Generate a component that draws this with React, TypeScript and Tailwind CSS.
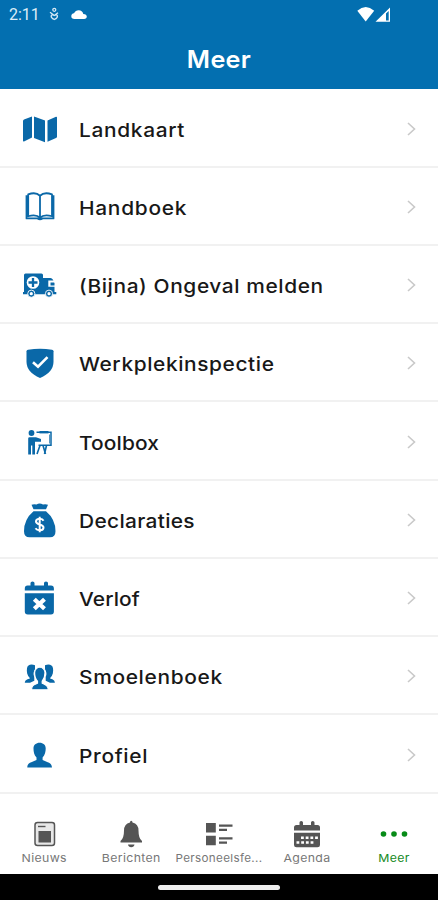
import type { ReactNode } from "react";

const BLUE = "#0a68a8";

function Icon({ top, children }: { top: number; children: ReactNode }) {
  return (
    <svg viewBox={`20 ${top} 40 40`} className="h-10 w-10 shrink-0" fill={BLUE}>
      {children}
    </svg>
  );
}

const rows: { label: string; spacing: string; icon: ReactNode }[] = [
  {
    label: "Landkaart",
    spacing: "tracking-[0.6px]",
    icon: (
      <Icon top={108.5}>
        <path d="M23 120.5Q23 119.5 24 119L32 116V137L24 141Q23 141.3 23 140.3ZM34 116L45 120V141.8L34 137.5ZM47.5 120L56 116.2Q57 116 57 117V136Q57 137 56 137.5L47.5 141.2Z" />
      </Icon>
    ),
  },
  {
    label: "Handboek",
    spacing: "tracking-[0.65px]",
    icon: (
      <Icon top={186.75}>
        <path
          d="M40 195.5C37 192.6 32.5 192.5 28.2 194.2V216C32 215 37.5 215 40 217.5C42.5 215 48 215 52 216V194.2C47.5 192.5 43 192.6 40 195.5V217M26.5 195V218.2H37.5Q40 220 42.5 218.2H53.5V195"
          fill="none"
          stroke={BLUE}
          strokeWidth="1.8"
          strokeLinejoin="round"
        />
      </Icon>
    ),
  },
  {
    label: "(Bijna) Ongeval melden",
    spacing: "tracking-[0.54px]",
    icon: (
      <Icon top={265}>
        <path d="M24 275Q24 273.5 25.5 273.5H41.5Q43 273.5 43 275V278H50.5Q52 278 52.8 279.5L54.5 283V292H56.3V294.2H23V292H24Z" />
        <circle cx="33" cy="282.5" r="6.3" fill="#fff" />
        <path d="M33 278V287M28.5 282.5H37.5" stroke={BLUE} strokeWidth="2.3" />
        <path d="M48.3 280.5H55V282.5H50.5V285.5H55V286.8H48.3Z" fill="#fff" />
        <circle cx="31.3" cy="293.7" r="3.6" stroke="#fff" strokeWidth=".9" />
        <circle cx="49" cy="293.7" r="3.6" stroke="#fff" strokeWidth=".9" />
        <circle cx="31.3" cy="293.7" r="1.6" fill="#fff" />
        <circle cx="49" cy="293.7" r="1.6" fill="#fff" />
      </Icon>
    ),
  },
  {
    label: "Werkplekinspectie",
    spacing: "tracking-[0.54px]",
    icon: (
      <Icon top={343.25}>
        <path d="M26.5 351.5Q26.5 350.3 28 350Q34 349 40 349Q46 349 52 350Q53.5 350.3 53.5 351.5V362Q53.5 372.5 40 378.3Q26.5 372.5 26.5 362Z" />
        <path d="M33 362.5L38 367L47.5 357.3" fill="none" stroke="#fff" strokeWidth="2.6" />
      </Icon>
    ),
  },
  {
    label: "Toolbox",
    spacing: "tracking-[0.1px]",
    icon: (
      <Icon top={421.5}>
        <circle cx="31.5" cy="432.5" r="2.9" />
        <path d="M28.2 438Q28.2 436.8 29.5 436.8H36L41 438.5V441.2H35V454H32.3V445H31V454H28.2Z" />
        <path d="M36.5 431.7H51V444.7H38.5" fill="none" stroke={BLUE} strokeWidth="1.5" />
        <path d="M39.5 431.7H48.5" stroke={BLUE} strokeWidth="2.4" />
        <path d="M40 445L37 453.5M46.5 445L44.5 453.5M43 445L45.5 453.5" fill="none" stroke={BLUE} strokeWidth="1.6" />
        <path d="M49.5 434V443" stroke={BLUE} strokeWidth=".7" />
      </Icon>
    ),
  },
  {
    label: "Declaraties",
    spacing: "tracking-[0.3px]",
    icon: (
      <Icon top={499.75}>
        <path d="M31.5 504.5Q34 503.5 36.5 504.3Q39.5 502.3 43 504.3Q45.5 503.5 48 504.5L46 509H33.5ZM33.5 511H46Q55.5 519 55.5 531Q55.5 537 50 537H29.5Q24 537 24 531Q24 519 33.5 511Z" />
        <path d="M43.5 520.5C42 517.5 36 518 36 521.3C36 525 43.5 523.5 43.5 527.2C43.5 530.5 37.5 531 35.5 528M39.7 516.5V532" fill="none" stroke="#fff" strokeWidth="2" />
      </Icon>
    ),
  },
  {
    label: "Verlof",
    spacing: "tracking-[0.1px]",
    icon: (
      <Icon top={578}>
        <path d="M24.8 590.5V588.5Q24.8 585.5 27.5 585.5H30.5V583Q30.5 581.5 32.5 581.5Q34.5 581.5 34.5 583V585.5H44V583Q44 581.5 46 581.5Q48 581.5 48 583V585.5H51Q53.9 585.5 53.9 588.5V590.5ZM24.8 593.3H53.9V611.5Q53.9 614.5 51 614.5H27.8Q24.8 614.5 24.8 611.5Z" />
        <path d="M34.3 599.2L44.5 608.8M44.5 599.2L34.3 608.8" stroke="#fff" strokeWidth="4.2" />
      </Icon>
    ),
  },
  {
    label: "Smoelenboek",
    spacing: "tracking-[0.6px]",
    icon: (
      <Icon top={656.25}>
        <path d="M24.8 683C25 679.8 28 679.6 30 678.5C27 675.5 26.5 672 27 668.5C27.5 665 31 664 35 665.5V669.5C33.5 671.5 33 675 34.3 677V681L30 683ZM54.9 683C54.7 679.8 52 679.6 50 678.5C53 675.5 53.5 672 53 668.5C52.5 665 49 664 45 665.5V669.5C46.5 671.5 47 675 45.7 677V681L50 683Z" />
        <path
          d="M31.5 690C31.8 685 34.5 685 37.5 683.5V681.5C35.5 679.5 34.6 676 34.6 673C34.6 669.8 37 667.5 39.8 667.5C42.6 667.5 45 669.8 45 673C45 676 44 679.5 42.2 681.5V683.5C45 685 48 685 48.3 690Z"
          stroke="#fff"
          strokeWidth="1.2"
        />
      </Icon>
    ),
  },
  {
    label: "Profiel",
    spacing: "tracking-[0.6px]",
    icon: (
      <Icon top={734.5}>
        <path d="M27.3 767C27.5 761.5 32 762 36.5 759.5V757C34 754.5 33.5 751 33.5 748C33.5 744.5 36 742.3 39.6 742.3C43.2 742.3 45.7 744.5 45.7 748C45.7 751 45 754.5 42.6 757V759.5C47 762 51.5 761.5 52 767Z" />
      </Icon>
    ),
  },
];

const tabs: { label: string; stretch: string; active?: boolean; icon: ReactNode }[] = [
  {
    label: "Nieuws",
    stretch: "scale-x-[1.12]",
    icon: (
      <svg viewBox="29.5 818.5 28 30" className="h-[30px] w-7" fill="#555">
        <rect x="34.5" y="822" width="19.5" height="23" rx="2.5" fill="#e8e8e8" stroke="#555" strokeWidth="1.5" />
        <path d="M37.5 826H45" stroke="#555" strokeWidth="1.4" />
        <rect x="38" y="830.5" width="12.5" height="11.5" />
      </svg>
    ),
  },
  {
    label: "Berichten",
    stretch: "scale-x-[1.12]",
    icon: (
      <svg viewBox="117.5 818.5 28 30" className="h-[30px] w-7" fill="#555">
        <path d="M130.5 822Q130.5 820.3 131.7 820.3Q133 820.3 133 822Q139 823.5 139 830Q139 838 142.5 840.5V842H121V840.5Q124.5 838 124.5 830Q124.5 823.5 130.5 822ZM128.5 844H135Q134.5 846.8 131.7 846.8Q129 846.8 128.5 844Z" />
      </svg>
    ),
  },
  {
    label: "Personeelsfe...",
    stretch: "scale-x-[1.06]",
    icon: (
      <svg viewBox="205 818.5 28 30" className="h-[30px] w-7" fill="#555">
        <path d="M206 822.5H215.8V832H206ZM206 835.3H215.8V844.8H206ZM219 824H232.5V826.2H219ZM219 828.2H227V830.4H219ZM219 836.7H232.5V838.9H219ZM219 841H227V843.2H219Z" />
      </svg>
    ),
  },
  {
    label: "Agenda",
    stretch: "scale-x-[1.12]",
    icon: (
      <svg viewBox="293 818.5 28 30" className="h-[30px] w-7" fill="#555">
        <path d="M294 830V827Q294 824.5 296.5 824.5H299.5V822Q299.5 820.5 301.2 820.5Q303 820.5 303 822V824.5H311V822Q311 820.5 312.7 820.5Q314.5 820.5 314.5 822V824.5H317.5Q320 824.5 320 827V830ZM294 832.3H320V844.5Q320 846.8 317.5 846.8H296.5Q294 846.8 294 844.5Z" />
        <path d="M301 837.2H318.5M296.5 842H314" stroke="#fff" strokeWidth="2.5" strokeDasharray="2.8 1.9" />
      </svg>
    ),
  },
  {
    label: "Meer",
    stretch: "scale-x-[1.12]",
    active: true,
    icon: (
      <svg viewBox="380 818.5 28 30" className="h-[30px] w-7" fill="#078b17">
        <circle cx="383.5" cy="833.5" r="2.8" />
        <circle cx="394" cy="833.5" r="2.8" />
        <circle cx="404.5" cy="833.5" r="2.8" />
      </svg>
    ),
  },
];

export default function App() {
  return (
    <div className="flex h-[900px] w-[438px] flex-col overflow-hidden bg-white font-['Inter',sans-serif]">
      <header className="flex h-[89.4px] shrink-0 flex-col bg-[#036fb0] text-white">
        <div className="flex h-7 items-center pl-[9px] pr-[46px]">
          <span className="w-[39px] pt-0.5 font-['Roboto',sans-serif] text-base leading-7 text-[#dcecf7]">2:11</span>
          <svg viewBox="48 6 12 16" className="h-4 w-3" fill="none" stroke="#d5e8f5" strokeWidth="1.3">
            <circle cx="54.3" cy="9.8" r="1.5" />
            <path d="M50 12.3L54.3 15.5L58 12.8M54.3 15.5C51 13.5 49.3 17 54.3 19.5C59.3 17 57.6 13.5 54.3 15.5" />
          </svg>
          <svg viewBox="71 8 16 11" className="ml-[11px] h-[11px] w-4" fill="#fff">
            <path d="M74.5 18Q71.3 18 71.3 15.3Q71.3 12.7 74 12.3Q75.5 9.3 78.7 9.3Q82.3 9.3 83.3 12.9Q86.8 13.2 86.8 15.6Q86.8 18 84 18Z" />
          </svg>
          <svg viewBox="357 4.5 36 19" className="ml-auto h-[19px] w-9" fill="#fff">
            <path d="M358.3 10.2Q366.7 2.8 375.2 10.2L366.7 21Z" />
            <path d="M391 7V21.3H376.5ZM387 13V20H389.7V10.5Z" fillRule="evenodd" />
          </svg>
        </div>
        <h1 className="scale-x-[1.05] pt-px text-center text-[24px] font-semibold leading-[62px] tracking-[0.3px]">Meer</h1>
      </header>

      <main className="flex h-[718px] shrink-0 flex-col">
        {rows.map((row) => (
          <div key={row.label} className="flex h-[78.25px] shrink-0 items-center border-b-2 border-[#f1f1f1] pl-5 pr-[22px] pt-0.5">
            {row.icon}
            <span
              className={`ml-[19px] origin-left scale-x-[1.1] whitespace-nowrap pt-1 text-[19px] font-medium leading-7 text-[#181818] ${row.spacing}`}
            >
              {row.label}
            </span>
            <svg viewBox="0 0 9 14" className="ml-auto h-3.5 w-[9px]" fill="none" stroke="#c9c9c9" strokeWidth="1.6">
              <path d="M1 1L7.5 7L1 13" />
            </svg>
          </div>
        ))}
      </main>

      <nav className="flex h-[66.6px] shrink-0 bg-white pt-[11.6px]">
        {tabs.map((tab) => (
          <div key={tab.label} className={`flex w-1/5 flex-col items-center ${tab.active ? "text-[#168a25]" : "text-[#777]"}`}>
            {tab.icon}
            <span className={`whitespace-nowrap text-[11px] leading-[19px] tracking-[0.3px] ${tab.stretch}`}>{tab.label}</span>
          </div>
        ))}
      </nav>

      <footer className="flex flex-1 items-center justify-center bg-black pt-px">
        <div className="h-[5px] w-[122px] rounded-full bg-[#ededed]" />
      </footer>
    </div>
  );
}
